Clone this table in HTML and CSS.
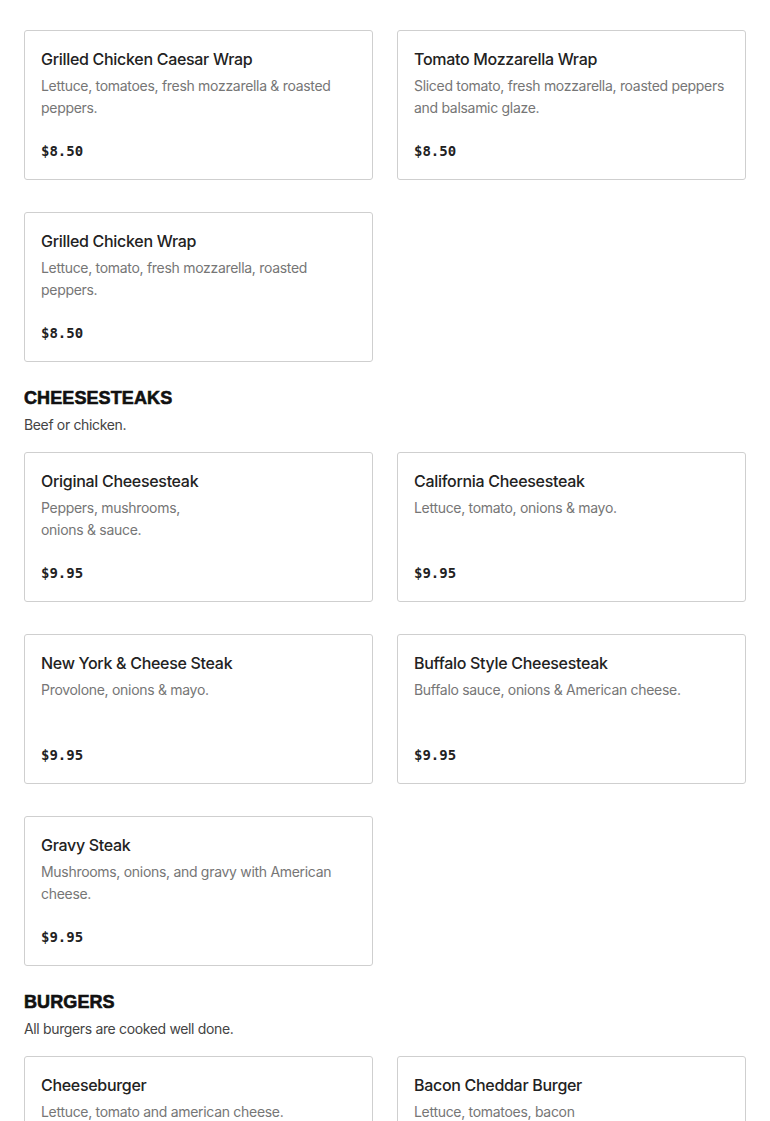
FILE: index.html
```html
<!DOCTYPE html>
<html lang="en">
<head>
<meta charset="utf-8">
<title>Menu</title>
<link rel="stylesheet" href="styles.css">
</head>
<body>
<main class="menu">
  <section class="section section-first">
    <div class="grid">
      <article class="card">
        <h3 class="name">Grilled Chicken Caesar Wrap</h3>
        <p class="desc">Lettuce, tomatoes, fresh mozzarella &amp; roasted peppers.</p>
        <p class="price">$8.50</p>
      </article>
      <article class="card">
        <h3 class="name">Tomato Mozzarella Wrap</h3>
        <p class="desc">Sliced tomato, fresh mozzarella, roasted peppers and balsamic glaze.</p>
        <p class="price">$8.50</p>
      </article>
      <article class="card">
        <h3 class="name">Grilled Chicken Wrap</h3>
        <p class="desc">Lettuce, tomato, fresh mozzarella, roasted peppers.</p>
        <p class="price">$8.50</p>
      </article>
    </div>
  </section>

  <section class="section">
    <h2 class="section-title">CHEESESTEAKS</h2>
    <p class="section-sub">Beef or chicken.</p>
    <div class="grid">
      <article class="card">
        <h3 class="name">Original Cheesesteak</h3>
        <p class="desc">Peppers, mushrooms,<br>onions &amp; sauce.</p>
        <p class="price">$9.95</p>
      </article>
      <article class="card">
        <h3 class="name">California Cheesesteak</h3>
        <p class="desc">Lettuce, tomato, onions &amp; mayo.</p>
        <p class="price">$9.95</p>
      </article>
      <article class="card">
        <h3 class="name">New York &amp; Cheese Steak</h3>
        <p class="desc">Provolone, onions &amp; mayo.</p>
        <p class="price">$9.95</p>
      </article>
      <article class="card">
        <h3 class="name">Buffalo Style Cheesesteak</h3>
        <p class="desc">Buffalo sauce, onions &amp; American cheese.</p>
        <p class="price">$9.95</p>
      </article>
      <article class="card">
        <h3 class="name">Gravy Steak</h3>
        <p class="desc">Mushrooms, onions, and gravy with American cheese.</p>
        <p class="price">$9.95</p>
      </article>
    </div>
  </section>

  <section class="section">
    <h2 class="section-title">BURGERS</h2>
    <p class="section-sub">All burgers are cooked well done.</p>
    <div class="grid">
      <article class="card">
        <h3 class="name">Cheeseburger</h3>
        <p class="desc">Lettuce, tomato and american cheese.</p>
        <p class="price">$9.95</p>
      </article>
      <article class="card">
        <h3 class="name">Bacon Cheddar Burger</h3>
        <p class="desc">Lettuce, tomatoes, bacon<br>and cheddar cheese.</p>
        <p class="price">$10.95</p>
      </article>
    </div>
  </section>
</main>
</body>
</html>
```

FILE: styles.css
```css
* { box-sizing: border-box; }

html, body {
  margin: 0;
  padding: 0;
  background: #ffffff;
}

body {
  font-family: Inter, "Liberation Sans", sans-serif;
  color: #222222;
}

.menu {
  padding: 30px 24px 0 24px;
}

.section {
  margin-top: 24px;
}

.section-first {
  margin-top: 0;
}

.section-title {
  margin: 0;
  font-family: "Liberation Sans", Arial, sans-serif;
  font-weight: 700;
  font-size: 18px;
  line-height: 24px;
  color: #111111;
  -webkit-text-stroke: 0.6px #111111;
  letter-spacing: 0.1px;
}

.section-sub {
  margin: 4px 0 16px 0;
  font-size: 14px;
  line-height: 22px;
  color: #444444;
  letter-spacing: -0.35px;
}

.grid {
  display: grid;
  grid-template-columns: 1fr 1fr;
  column-gap: 24px;
  row-gap: 32px;
}

.card {
  border: 1px solid #cfcfcf;
  border-radius: 3px;
  padding: 16px;
  display: flex;
  flex-direction: column;
}

.name {
  margin: 0;
  font-size: 16px;
  line-height: 24px;
  font-weight: 500;
  color: #222222;
  letter-spacing: -0.3px;
}

.desc {
  margin: 4px 0 0 0;
  font-size: 14px;
  line-height: 22px;
  color: #767676;
  min-height: 44px;
  letter-spacing: -0.3px;
}

.price {
  margin: 21px 0 0 0;
  font-family: "DejaVu Sans Mono", "Liberation Mono", monospace;
  font-weight: 700;
  font-size: 14px;
  line-height: 23px;
  color: #222222;
}
```
